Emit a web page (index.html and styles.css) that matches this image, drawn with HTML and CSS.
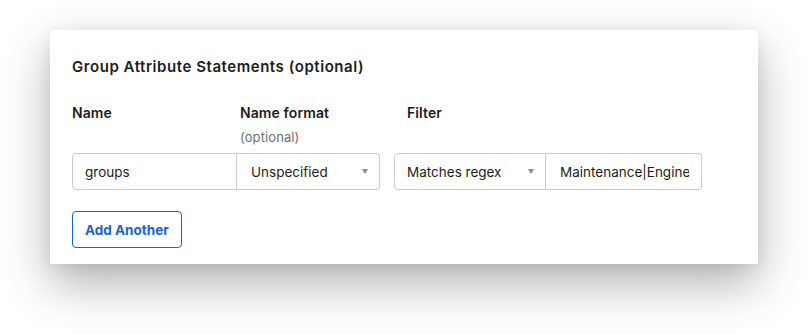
FILE: index.html
```html
<!DOCTYPE html>
<html lang="en">
  <head>
    <meta charset="UTF-8">
    <meta name="viewport" content="width=device-width, initial-scale=1.0">
    <title>Group Attribute Statements</title>
    <link rel="stylesheet" href="styles.css">
  </head>
  <body>
    <div class="card">
      <h2 class="title">Group Attribute Statements (optional)</h2>

      <div class="statement">
        <div class="label label-name">Name</div>
        <div class="label label-format">Name format<span class="hint">(optional)</span></div>
        <div class="spacer"></div>
        <div class="label label-filter">Filter</div>
        <div class="label"></div>

        <input class="field field-left" type="text" value="groups">
        <div class="select field-right">
          <span>Unspecified</span>
          <span class="caret"></span>
        </div>
        <div class="spacer"></div>
        <div class="select field-left">
          <span>Matches regex</span>
          <span class="caret"></span>
        </div>
        <input class="field field-right" type="text" value="Maintenance|Engineering">
      </div>

      <button class="add-btn">Add Another</button>
    </div>
  </body>
</html>
```

FILE: styles.css
```css
html,
body {
  height: 100%;
}

body {
  margin: 0;
  padding: 30px 50px;
  box-sizing: border-box;
  background-color: #fff;
  font-family: Inter, "Open Sans", sans-serif;
  color: #1d1d21;
}

.card {
  background-color: #fff;
  height: 234px;
  box-sizing: border-box;
  padding: 27px 22px 0;
  box-shadow: 0 20px 45px rgba(0, 0, 0, 0.3), 0 2px 14px rgba(0, 0, 0, 0.08);
}

.title {
  margin: 0;
  font-size: 15px;
  font-weight: 600;
  letter-spacing: 0.55px;
  line-height: 20px;
}

.statement {
  display: grid;
  grid-template-columns: 165px 143px 14px 152px 156px;
  margin-top: 26px;
}

.label {
  font-size: 14px;
  font-weight: 600;
  letter-spacing: 0.1px;
  line-height: 20px;
}

.label-format {
  padding-left: 3px;
}

.label-filter {
  padding-left: 13px;
}

.hint {
  display: block;
  margin-top: 4px;
  font-weight: 400;
  font-size: 13px;
  color: #6e6e78;
}

.field,
.select {
  height: 37px;
  box-sizing: border-box;
  margin-top: 6px;
  border: 1px solid #c9c9ce;
  background-color: #fff;
  font-family: inherit;
  font-size: 13.5px;
  color: #1d1d21;
  padding: 0 12px;
  width: 100%;
}

.field {
  outline: none;
}

.select {
  display: flex;
  align-items: center;
  justify-content: space-between;
}

.field-left {
  border-radius: 4px 0 0 4px;
}

.field-right {
  border-radius: 0 4px 4px 0;
  border-left: none;
  padding-left: 14px;
}

.caret {
  width: 0;
  height: 0;
  border-left: 3.5px solid transparent;
  border-right: 3.5px solid transparent;
  border-top: 5px solid #8c8c96;
  margin-right: -1px;
}

.add-btn {
  margin-top: 21px;
  height: 37px;
  padding: 0 12px;
  border: 1px solid #1662dd;
  border-radius: 4px;
  background-color: #fff;
  color: #1662dd;
  font-family: inherit;
  font-size: 13.5px;
  font-weight: 700;
  cursor: pointer;
}
```
